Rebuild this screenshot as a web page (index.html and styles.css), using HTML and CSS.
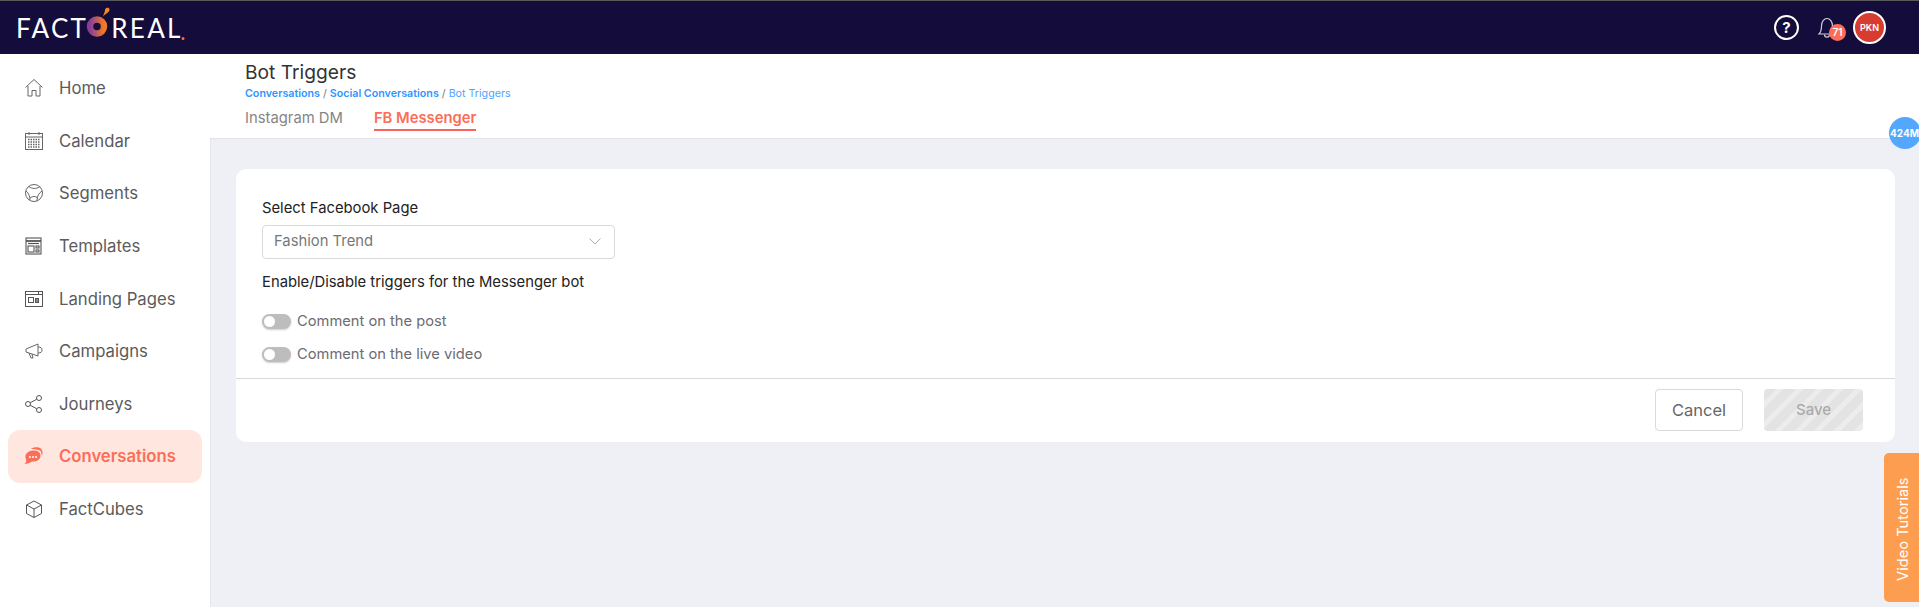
FILE: index.html
```html
<!DOCTYPE html>
<html lang="en">
<head>
<meta charset="utf-8">
<title>Bot Triggers</title>
<link rel="stylesheet" href="styles.css">
</head>
<body>
<header class="topbar">
  <div class="logo">
    <span class="logo-text">FACT</span>
    <svg class="logo-o" width="26" height="34" viewBox="0 0 26 34">
      <defs><linearGradient id="og" x1="0" y1="0" x2="1" y2="0"><stop offset="0" stop-color="#8a3c9c"/><stop offset="1" stop-color="#f47a1f"/></linearGradient></defs>
      <circle cx="12" cy="20.500" r="7" fill="none" stroke="url(#og)" stroke-width="6.500"/>
      <path d="M18 10.500 C19 7 20 6 20 3.500 C21 1 24.500 1 24.500 3.500 C24.500 6 21.500 7 18 10.500Z" fill="#f08a24"/>
    </svg>
    <span class="logo-text">REAL</span><span class="logo-dot">.</span>
  </div>
  <div class="top-actions">
    <span class="help">?</span>
    <span class="bell">
      <svg width="20" height="22" viewBox="0 0 20 22" fill="none" stroke="#cfcbe0" stroke-width="1.200"><path d="M2 17 C4 15 4.500 13 4.500 9 C4.500 4.500 7 1.500 10 1.500 C13 1.500 15.500 4.500 15.500 9 C15.500 13 16 15 18 17Z"/><path d="M7.500 17.500 C7.500 21 12.500 21 12.500 17.500"/></svg>
      <span class="bell-badge">71</span>
    </span>
    <span class="avatar">PKN</span>
  </div>
</header>
<div class="shell">
  <nav class="sidebar">
    <a class="nav-item"><svg class="ico" viewBox="0 0 20 20" fill="none" stroke="#666" stroke-width="1"><path d="M1.500 9.500 L10 1.500 L18.500 9.500"/><path d="M4 8 V18 H8 V12.500 H12 V18 H16 V8"/></svg>Home</a>
    <a class="nav-item"><svg class="ico" viewBox="0 0 20 20" fill="none" stroke="#666" stroke-width="1"><rect x="1.500" y="2.500" width="17" height="16"/><path d="M1.500 6 H18.500 M5 1 V4 M15 1 V4"/><path d="M4 8.500 H16 M4 11 H16 M4 13.500 H16 M4 16 H16" stroke-dasharray="1.500 1" stroke-width="1.500"/></svg>Calendar</a>
    <a class="nav-item"><svg class="ico" viewBox="0 0 20 20" fill="none" stroke="#666" stroke-width="1"><circle cx="10" cy="10" r="8.500"/><path d="M5 3.500 C8 6 12 6 15.500 4 M2 8 C5 10 6 14 6 17.500 M18 8 C15 10 13 13 13 18 M6 15 C9 13 11 13 14 15"/></svg>Segments</a>
    <a class="nav-item"><svg class="ico" viewBox="0 0 20 20" fill="none" stroke="#555" stroke-width="1.100"><rect x="2" y="2" width="15" height="16"/><path d="M2 5 H17" stroke-width="1.800"/><path d="M4 7.500 H15" stroke-width="1.200"/><rect x="4" y="10" width="6" height="6"/><rect x="12" y="10" width="3" height="2"/><rect x="12" y="14" width="3" height="2"/></svg>Templates</a>
    <a class="nav-item"><svg class="ico" viewBox="0 0 20 20" fill="none" stroke="#555" stroke-width="1"><rect x="1.500" y="2.500" width="17" height="15"/><path d="M1.500 5.500 H18.500 M14.500 2.500 V5.500"/><rect x="4.500" y="8.500" width="5" height="5"/><rect x="11.500" y="9.500" width="3" height="4" fill="#888"/></svg>Landing Pages</a>
    <a class="nav-item"><svg class="ico" viewBox="0 0 20 20" fill="none" stroke="#666" stroke-width="1"><path d="M2 8 L14 3 V15 L2 11Z"/><path d="M14 6 C17 6 18 7 18 9 C18 11 17 12 14 12"/><path d="M5 12 L7 17 H9 L8 13"/></svg>Campaigns</a>
    <a class="nav-item"><svg class="ico" viewBox="0 0 20 20" fill="none" stroke="#555" stroke-width="1"><circle cx="4" cy="10" r="2.500"/><circle cx="15" cy="4" r="2.500"/><circle cx="15" cy="16" r="2.500"/><path d="M6.200 8.800 L12.800 5.200 M6.200 11.200 L12.800 14.800"/></svg>Journeys</a>
    <a class="nav-item active"><svg class="ico" viewBox="0 0 20 20"><path d="M7 3 C9 1 14 0.500 17 2.500 C19 4.500 19 8 17.500 9.500 L17 5.500 C15 3.500 10 3 7 3Z" fill="#fb6e59"/><path d="M9 4.500 C14 4 17 7 16.500 10.500 C16 14 12 16 8 15.500 C6 17 3 18 0.500 18 C2 16.500 2.500 15 2 13.500 C0 9 3 5 9 4.500Z" fill="#fb6e59"/><circle cx="6" cy="11" r="1" fill="#fff"/><circle cx="9" cy="11" r="1" fill="#fff"/><circle cx="12" cy="11" r="1" fill="#fff"/></svg>Conversations</a>
    <a class="nav-item"><svg class="ico" viewBox="0 0 20 20" fill="none" stroke="#555" stroke-width="1"><path d="M10 2 L17.500 6 V14.500 L10 18.500 L2.500 14.500 V6Z"/><path d="M2.500 6 L10 10 L17.500 6 M10 10 V18.500"/></svg>FactCubes</a>
  </nav>
  <main class="main">
    <section class="page-head">
      <h1 class="title">Bot Triggers</h1>
      <div class="crumbs"><b>Conversations</b> <i>/</i> <b>Social Conversations</b> <i>/</i> Bot Triggers</div>
      <div class="tabs">
        <span class="tab">Instagram DM</span>
        <span class="tab tab-active">FB Messenger</span>
      </div>
    </section>
    <section class="card">
      <div class="card-body">
        <label class="field-label">Select Facebook Page</label>
        <div class="select">Fashion Trend
          <svg width="12" height="7" viewBox="0 0 12 7" fill="none" stroke="#aaa" stroke-width="1"><path d="M0.500 0.500 L6 6 L11.500 0.500"/></svg>
        </div>
        <div class="field-label enable">Enable/Disable triggers for the Messenger bot</div>
        <div class="toggle-row first"><span class="toggle"></span>Comment on the post</div>
        <div class="toggle-row"><span class="toggle"></span>Comment on the live video</div>
      </div>
      <div class="card-foot">
        <button class="btn">Cancel</button>
        <button class="btn btn-save">Save</button>
      </div>
    </section>
  </main>
</div>
<span class="mem">424M</span>
<span class="video">Video Tutorials</span>
</body>
</html>
```
FILE: styles.css
```css
* { box-sizing: border-box; }
html, body { height: 100%; }
body { margin: 0; font-family: Inter, "Liberation Sans", sans-serif; background: #eff0f5; overflow: hidden; display: flex; flex-direction: column; }

.topbar { height: 54px; flex: none; background: #140c3a; border-top: 1px solid #5a5a5a; display: flex; align-items: center; justify-content: space-between; padding: 0 33px 0 16px; }
.logo { display: flex; align-items: center; height: 53px; color: #fff; }
.logo-text { font: 400 26px/1 Lato, sans-serif; letter-spacing: 2.300px; }
.logo-o { margin: -9px 0 0 -3px; flex: none; }
.logo-dot { color: #f07a2a; font: 700 18px/1 Lato, sans-serif; margin: 10px 0 0 -2px; }
.top-actions { display: flex; align-items: center; }
.help { width: 25px; height: 25px; border: 2px solid #fff; border-radius: 50%; color: #fff; font: 700 15px/21px Inter, sans-serif; text-align: center; margin-right: 18px; }
.bell { position: relative; display: flex; width: 31px; margin-right: 5px; }
.bell-badge { position: absolute; left: 12px; top: 7px; width: 17px; height: 17px; border-radius: 50%; background: #fb6e59; color: #fff; font: 600 10px/17px Inter, sans-serif; text-align: center; }
.avatar { width: 33px; height: 33px; border: 2px solid #fff; border-radius: 50%; background: #d63c30; color: #fff; font: 600 9px/29px Inter, sans-serif; text-align: center; }

.shell { flex: 1; display: flex; min-height: 0; }
.sidebar { width: 210px; flex: none; background: #fff; padding: 8px 8px 0; box-shadow: 1px 0 0 #e6e7ee; }
.nav-item { height: 52.600px; display: flex; align-items: center; gap: 15px; padding-left: 16px; font-size: 16.700px; color: #5b5b5b; border-radius: 12px; }
.nav-item.active { background: #ffe7df; color: #fb6e59; font-weight: 600; }
.ico { width: 20px; height: 20px; flex: none; }

.main { flex: 1; min-width: 0; }
.page-head { height: 85px; background: #fff; border-bottom: 1px solid #e4e4e8; padding: 6px 0 0 35px; }
.title { margin: 0; font-size: 19.200px; font-weight: 400; line-height: 24px; color: #333; }
.crumbs { font-size: 10.700px; line-height: 14px; margin-top: 3px; color: #4fa3ff; }
.crumbs b { font-weight: 600; color: #2f95ff; }
.crumbs i { font-style: normal; color: #777; }
.tabs { display: flex; gap: 31px; margin-top: 7px; }
.tab { font-size: 14.800px; line-height: 20px; color: #858585; padding: 0 0 1px; }
.tab-active { color: #fb6e59; font-weight: 600; border-bottom: 2px solid #f8625a; }

.card { margin: 30px 24px 0 26px; height: 273px; background: #fff; border-radius: 10px; display: flex; flex-direction: column; }
.card-body { height: 210px; padding: 30px 26px 0; border-bottom: 1px solid #d9d9d9; }
.field-label { display: block; font-size: 14.800px; line-height: 18px; color: #222; }
.select { width: 353px; height: 34px; margin-top: 8px; border: 1px solid #d9d9d9; border-radius: 4px; padding: 0 13px 2px 11px; font-size: 14.800px; color: #777; display: flex; align-items: center; justify-content: space-between; }
.enable { margin-top: 14px; }
.toggle-row { display: flex; align-items: center; height: 16px; gap: 6px; font-size: 14.700px; color: #6c6c72; }
.toggle-row.first { margin-top: 22px; }
.toggle-row + .toggle-row { margin-top: 17px; }
.toggle { position: relative; width: 29px; height: 15px; border-radius: 8px; background: #bdbdbd; box-shadow: 0 1px 2px rgba(0,0,0,.2); flex: none; }
.toggle::after { content: ""; position: absolute; left: 2px; top: 2px; width: 11px; height: 11px; border-radius: 50%; background: #fff; }
.card-foot { flex: 1; display: flex; justify-content: flex-end; gap: 21px; padding: 10px 32px 0 0; }
.btn { height: 42px; width: 88px; background: #fff; border: 1px solid #d9d9d9; border-radius: 4px; font: 400 16.500px Inter, sans-serif; color: #666; }
.btn-save { width: 99px; border: 0; color: #aaa; font-size: 15px; font-weight: 500; padding-bottom: 3px; background: repeating-linear-gradient(135deg, #e3e3e3 0 9px, #ececec 9px 14px); }

.mem { position: absolute; left: 1889px; top: 117px; width: 32px; height: 32px; border-radius: 50%; background: #53a7fd; color: #fff; font: 700 10px/32px Inter, sans-serif; text-align: center; white-space: nowrap; text-indent: -1px; }
.video { position: absolute; left: 1884px; top: 453px; width: 35px; height: 149px; padding: 0 2px 4px 0; background: #fd9d50; color: #fff; font-size: 14.700px; writing-mode: vertical-rl; transform: rotate(180deg); border-radius: 0 5px 5px 0; display: flex; align-items: center; justify-content: center; }
```
